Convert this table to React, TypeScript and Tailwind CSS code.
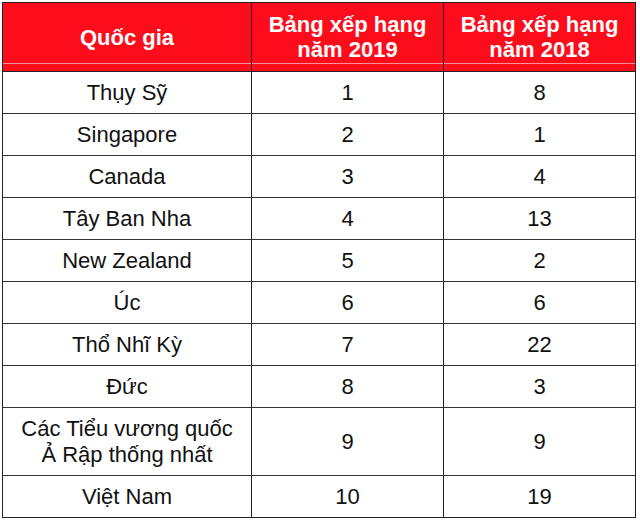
const ROWS: { country: string[]; y2019: string; y2018: string }[] = [
  { country: ['Thụy Sỹ'], y2019: '1', y2018: '8' },
  { country: ['Singapore'], y2019: '2', y2018: '1' },
  { country: ['Canada'], y2019: '3', y2018: '4' },
  { country: ['Tây Ban Nha'], y2019: '4', y2018: '13' },
  { country: ['New Zealand'], y2019: '5', y2018: '2' },
  { country: ['Úc'], y2019: '6', y2018: '6' },
  { country: ['Thổ Nhĩ Kỳ'], y2019: '7', y2018: '22' },
  { country: ['Đức'], y2019: '8', y2018: '3' },
  { country: ['Các Tiểu vương quốc', 'Ả Rập thống nhất'], y2019: '9', y2018: '9' },
  { country: ['Việt Nam'], y2019: '10', y2018: '19' },
];

const headCell =
  'flex flex-col items-center justify-center bg-[#fd0d1c] text-center leading-[25px] shadow-[inset_0_-7px_0_#fd0d1c,inset_0_-8px_0_#ff8f98]';

export default function App() {
  return (
    <div className="min-h-[522px] bg-white pl-[2px] pt-[2px] font-['Liberation_Sans',Arial,sans-serif] text-[22px] text-[#111]">
      <div className="w-[634px] border border-[#222]">
        <div className="flex h-[69px] border-b border-[#222] font-bold text-white">
          <div className={`${headCell} w-[249px] border-r border-[#222]`}>
            <span>Quốc gia</span>
          </div>
          <div className={`${headCell} w-[192px] border-r border-[#222]`}>
            <span>Bảng xếp hạng</span>
            <span>năm 2019</span>
          </div>
          <div className={`${headCell} flex-1`}>
            <span>Bảng xếp hạng</span>
            <span>năm 2018</span>
          </div>
        </div>
        {ROWS.map((row, i) => {
          const last = i === ROWS.length - 1;
          return (
            <div
              key={row.y2019}
              className={`flex ${row.country.length > 1 ? 'h-[68px]' : last ? 'h-[41px]' : 'h-[42px]'} ${
                last ? '' : 'border-b border-[#333]'
              }`}
            >
              <div className="flex w-[249px] flex-col items-center justify-center border-r border-[#222] leading-[26px]">
                {row.country.map((line) => (
                  <span key={line}>{line}</span>
                ))}
              </div>
              <div className="flex w-[192px] items-center justify-center border-r border-[#222]">
                {row.y2019}
              </div>
              <div className="flex flex-1 items-center justify-center">{row.y2018}</div>
            </div>
          );
        })}
      </div>
    </div>
  );
}
